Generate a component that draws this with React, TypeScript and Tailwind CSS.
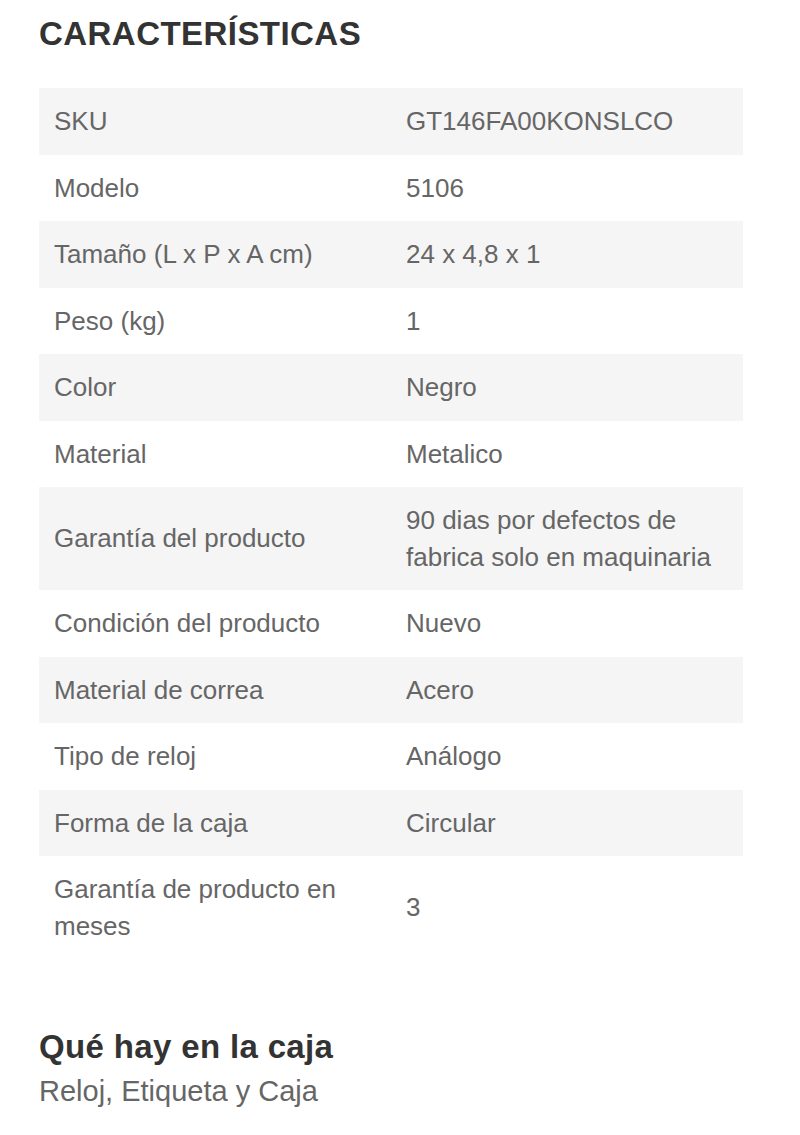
const rows: { label: string; value: string }[] = [
  { label: "SKU", value: "GT146FA00KONSLCO" },
  { label: "Modelo", value: "5106" },
  { label: "Tamaño (L x P x A cm)", value: "24 x 4,8 x 1" },
  { label: "Peso (kg)", value: "1" },
  { label: "Color", value: "Negro" },
  { label: "Material", value: "Metalico" },
  { label: "Garantía del producto", value: "90 dias por defectos de fabrica solo en maquinaria" },
  { label: "Condición del producto", value: "Nuevo" },
  { label: "Material de correa", value: "Acero" },
  { label: "Tipo de reloj", value: "Análogo" },
  { label: "Forma de la caja", value: "Circular" },
  { label: "Garantía de producto en meses", value: "3" },
];

const App = () => {
  return (
    <div className="w-[800px] min-h-[1135px] bg-white px-[39px] pt-[15px] font-['Liberation_Sans',Arial,sans-serif]">
      <h2 className="text-[33px] leading-[38px] font-bold tracking-[0.45px] text-[#333]">CARACTERÍSTICAS</h2>

      {/* product specs table */}
      <div className="mt-[35px] w-[704px]">
        {rows.map((row, i) => (
          <div key={row.label} className={`grid grid-cols-2 ${i % 2 === 0 ? "bg-[#f5f5f5]" : "bg-white"}`}>
            <div className="flex items-center px-[15px] py-[15px] text-[26px] leading-[36.5px] text-[#666]">
              {row.label}
            </div>
            <div className="flex items-center px-[15px] py-[15px] text-[26px] leading-[36.5px] text-[#666]">
              {row.value}
            </div>
          </div>
        ))}
      </div>

      <h3 className="mt-[69px] text-[33px] leading-[38px] font-bold tracking-[0.35px] text-[#333]">Qué hay en la caja</h3>
      <p className="mt-[7px] text-[29px] leading-[36px] text-[#666]">Reloj, Etiqueta y Caja</p>
    </div>
  );
};

export default App;
